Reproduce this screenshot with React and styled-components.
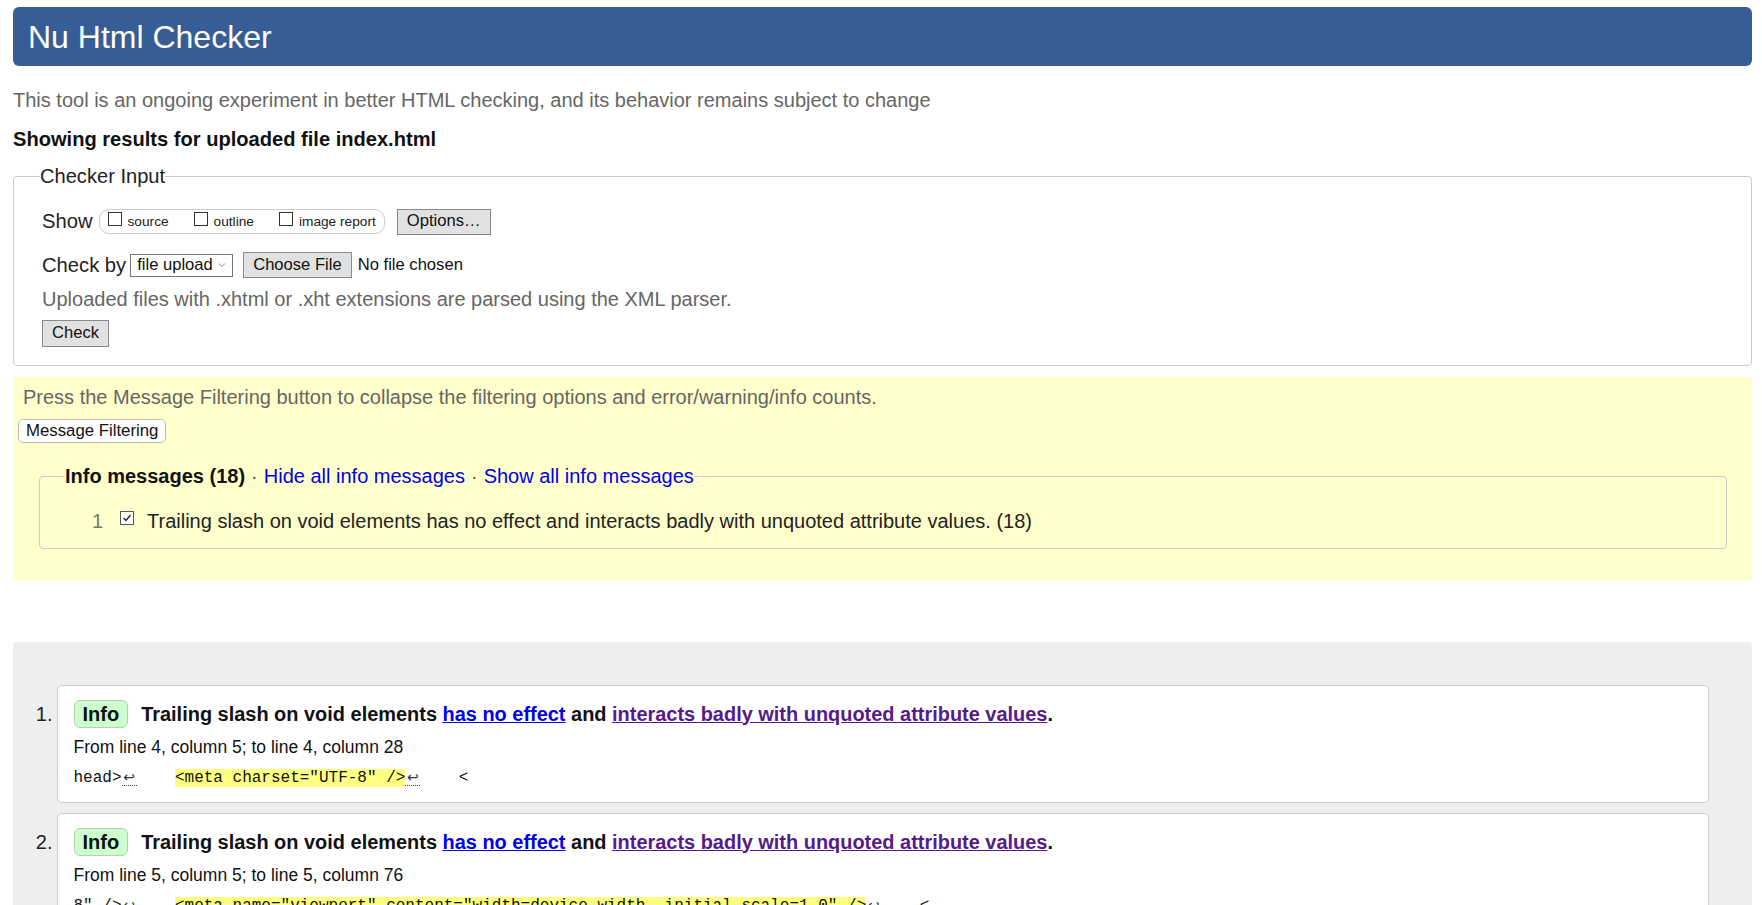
import React from 'react';
import styled, { createGlobalStyle } from 'styled-components';

const GlobalStyle = createGlobalStyle`
  html, body { margin: 0; padding: 0; background: #fff; }
  body {
    font-family: "Liberation Sans", Arial, sans-serif;
    font-size: 20px;
    color: #222;
  }
`;

const Page = styled.div`
  padding: 7px 10px 0 13px;
`;

const Header = styled.header`
  height: 59px;
  display: flex;
  align-items: center;
  padding-left: 15px;
  background: #365d95;
  border-radius: 6px;
  color: #fff;
`;

const Title = styled.h1`
  margin: 0;
  font-size: 32px;
  font-weight: normal;
  line-height: 1;
`;

const Intro = styled.p`
  margin: 22px 0 0;
  color: #666;
  line-height: 24px;
`;

const ResultsHeading = styled.h2`
  margin: 15px 0 0;
  font-size: 20.1px;
  font-weight: bold;
  line-height: 24px;
  color: #111;
`;

const Fieldset = styled.fieldset`
  margin: 13px 0 0;
  border: 1px solid #ccc;
  border-radius: 4px;
  padding: 20px 20px 18px 28px;
  min-width: 0;
`;

const Legend = styled.legend`
  padding: 0;
  margin-left: -2px;
  line-height: 24px;
  font-size: 20.1px;
`;

const Row = styled.div`
  display: flex;
  align-items: center;
  height: ${(p) => p.$h}px;
  margin-top: ${(p) => p.$mt || 0}px;
`;

const FieldLabel = styled.span`
  font-size: 20.2px;
  margin-right: ${(p) => p.$gap}px;
`;

const Pill = styled.div`
  display: flex;
  align-items: center;
  height: 23px;
  padding: 0 8px;
  border: 1px solid #ccc;
  border-radius: 10px;
  gap: 25px;
`;

const CheckItem = styled.label`
  display: flex;
  align-items: center;
  gap: 6px;
  font-size: 13.7px;
  color: #222;
`;

const Box = styled.span`
  display: inline-flex;
  align-items: center;
  justify-content: center;
  width: 12px;
  height: 12px;
  border: 1px solid ${(p) => p.$tone || '#333'};
  background: #fff;
  margin-top: ${(p) => p.$lift || 0}px;
  margin-left: ${(p) => p.$ml || 0}px;
  flex: none;
`;

const Button = styled.button`
  font-family: inherit;
  font-size: 16.6px;
  color: #111;
  height: ${(p) => p.$h || 26}px;
  padding: 0 9px;
  margin-left: ${(p) => p.$ml || 0}px;
  background: #e1e1e1;
  border: 1px solid #8a8a8a;
  border-radius: 0;
  line-height: 1;
`;

const Select = styled.div`
  display: flex;
  align-items: center;
  justify-content: space-between;
  box-sizing: border-box;
  width: 103px;
  height: 23px;
  padding: 0 6px 0 6px;
  border: 1px solid #777;
  background: #fff;
  font-size: 16.6px;
  color: #111;
`;

const FileStatus = styled.span`
  font-size: 16.6px;
  margin-left: 6px;
  color: #111;
`;

const Hint = styled.p`
  margin: 10px 0 0;
  color: #666;
  line-height: 22px;
`;

const FilterPanel = styled.section`
  margin-top: 11px;
  background: #ffffcc;
  padding: 8px 25px 31px 5px;
`;

const FilterNote = styled.p`
  margin: 0;
  padding-left: 5px;
  color: #666;
  line-height: 24px;
`;

const PillButton = styled.button`
  margin-top: 10px;
  height: 24px;
  padding: 0 7px;
  font-family: inherit;
  font-size: 16.8px;
  color: #111;
  background: #fff;
  border: 1px solid #bbb;
  border-radius: 5px;
  line-height: 1;
`;

const InfoFieldset = styled.fieldset`
  margin: 21px 0 0 21px;
  border: 1px solid #ccc;
  border-radius: 4px;
  padding: 21px 20px 15px 25px;
  min-width: 0;
`;

const InfoLegend = styled.legend`
  padding: 0;
  line-height: 24px;
`;

const Strong = styled.strong`
  font-size: 20px;
  color: #111;
`;

const Sep = styled.span`
  color: #555;
  font-size: 20px;
  margin: 0 6px;
`;

const LegendLink = styled.a`
  color: #0000ee;
  text-decoration: none;
  font-size: 20px;
`;

const CountRow = styled.div`
  display: flex;
  align-items: center;
  height: 24px;
  padding-left: 27px;
`;

const Count = styled.span`
  color: #777;
  width: 12px;
`;

const CountText = styled.span`
  margin-left: 13px;
`;

const ResultsPanel = styled.section`
  margin-top: 62px;
  background: #eee;
  border-radius: 4px 4px 0 0;
  padding: 43px 43px 40px 0;
`;

const MessageList = styled.ol`
  list-style: none;
  margin: 0;
  padding: 0;
`;

const MessageItem = styled.li`
  display: grid;
  grid-template-columns: 43.5px 1fr;
  margin-bottom: 10px;
`;

const ItemNumber = styled.span`
  text-align: right;
  padding-right: 4px;
  padding-top: 15px;
  line-height: 28px;
  color: #222;
`;

const Card = styled.div`
  background: #fff;
  border: 1px solid #ccc;
  border-radius: 5px;
  padding: 14px 16px 14px;
`;

const MessageHead = styled.div`
  display: flex;
  align-items: center;
  gap: 13px;
  height: 28px;
`;

const Badge = styled.span`
  display: inline-flex;
  align-items: center;
  height: 26px;
  padding: 0 8px;
  background: #ccffcc;
  border: 1px solid #b5cfb5;
  border-radius: 6px;
  font-weight: bold;
  color: #111;
`;

const MessageTitle = styled.p`
  margin: 0;
  font-size: 19.95px;
  font-weight: bold;
  color: #111;
`;

const DocLink = styled.a`
  color: ${(p) => (p.$visited ? '#551a8b' : '#0000ee')};
  text-decoration: underline;
`;

const Location = styled.p`
  margin: 8px 0 0;
  font-size: 17.5px;
  line-height: 22px;
  color: #111;
`;

const Extract = styled.p`
  margin: 10px 0 0;
  font-family: "Liberation Mono", "DejaVu Sans Mono", monospace;
  font-size: 16px;
  line-height: 20px;
  white-space: pre;
  color: #111;
`;

const LineBreak = styled.b`
  display: inline-block;
  width: 15px;
  font-weight: normal;
  font-family: "DejaVu Sans", sans-serif;
  font-size: 14px;
  line-height: 15px;
  text-align: center;
  border-bottom: 1px dotted #444;
  color: #333;
`;

const Mark = styled.mark`
  background: #ffff80;
  color: #111;
`;

const Chevron = () => (
  <svg width="8" height="6" viewBox="0 0 8 6" aria-hidden="true">
    <path d="M1 1.5 L4 4.5 L7 1.5" fill="none" stroke="#888" strokeWidth="1" />
  </svg>
);

const Tick = () => (
  <svg width="10" height="10" viewBox="0 0 10 10" aria-hidden="true">
    <path d="M1.5 5 L4 7.5 L8.5 2" fill="none" stroke="#222" strokeWidth="1.4" />
  </svg>
);

const messages = [
  {
    from: 'From line 4, column 5; to line 4, column 28',
    before: 'head>',
    mark: '<meta charset="UTF-8" />',
  },
  {
    from: 'From line 5, column 5; to line 5, column 76',
    before: '8" />',
    mark: '<meta name="viewport" content="width=device-width, initial-scale=1.0" />',
  },
];

export default function App() {
  return (
    <>
      <GlobalStyle />
      <Page>
        <Header>
          <Title>Nu Html Checker</Title>
        </Header>
        <Intro>
          This tool is an ongoing experiment in better HTML checking, and its behavior remains subject to change
        </Intro>
        <ResultsHeading>Showing results for uploaded file index.html</ResultsHeading>

        <Fieldset>
          <Legend>Checker Input</Legend>
          <Row $h={27}>
            <FieldLabel $gap={6}>Show</FieldLabel>
            <Pill>
              <CheckItem><Box $lift={-5} />source</CheckItem>
              <CheckItem><Box $lift={-5} />outline</CheckItem>
              <CheckItem><Box $lift={-5} />image report</CheckItem>
            </Pill>
            <Button $ml={12}>Options…</Button>
          </Row>
          <Row $h={26} $mt={17}>
            <FieldLabel $gap={4}>Check by</FieldLabel>
            <Select>
              <span>file upload</span>
              <Chevron />
            </Select>
            <Button $ml={10}>Choose File</Button>
            <FileStatus>No file chosen</FileStatus>
          </Row>
          <Hint>Uploaded files with .xhtml or .xht extensions are parsed using the XML parser.</Hint>
          <Row $h={27} $mt={10}>
            <Button $h={27}>Check</Button>
          </Row>
        </Fieldset>

        <FilterPanel>
          <FilterNote>
            Press the Message Filtering button to collapse the filtering options and error/warning/info counts.
          </FilterNote>
          <PillButton>Message Filtering</PillButton>
          <InfoFieldset>
            <InfoLegend>
              <Strong>Info messages (18)</Strong>
              <Sep>·</Sep>
              <LegendLink href="#hide">Hide all info messages</LegendLink>
              <Sep>·</Sep>
              <LegendLink href="#show">Show all info messages</LegendLink>
            </InfoLegend>
            <CountRow>
              <Count>1</Count>
              <Box $tone="#555" $lift={-6} $ml={16}>
                <Tick />
              </Box>
              <CountText>
                Trailing slash on void elements has no effect and interacts badly with unquoted attribute values. (18)
              </CountText>
            </CountRow>
          </InfoFieldset>
        </FilterPanel>

        <ResultsPanel>
          <MessageList>
            {messages.map((m, i) => (
              <MessageItem key={i}>
                <ItemNumber>{i + 1}.</ItemNumber>
                <Card>
                  <MessageHead>
                    <Badge>Info</Badge>
                    <MessageTitle>
                      Trailing slash on void elements{' '}
                      <DocLink href="#no-effect">has no effect</DocLink>
                      {' and '}
                      <DocLink $visited href="#unquoted">interacts badly with unquoted attribute values</DocLink>.
                    </MessageTitle>
                  </MessageHead>
                  <Location>{m.from}</Location>
                  <Extract>
                    {m.before}
                    <LineBreak title="Line break">↩</LineBreak>
                    {'    '}
                    <Mark>{m.mark}</Mark>
                    <LineBreak title="Line break">↩</LineBreak>
                    {'    <'}
                  </Extract>
                </Card>
              </MessageItem>
            ))}
          </MessageList>
        </ResultsPanel>
      </Page>
    </>
  );
}
